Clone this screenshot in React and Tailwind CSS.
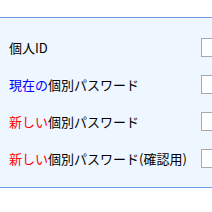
export default function App() {
  const rows = [
    { pre: "", preColor: "", rest: "個人ID" },
    { pre: "現在の", preColor: "text-[#0000ff]", rest: "個別パスワード" },
    { pre: "新しい", preColor: "text-[#ff0000]", rest: "個別パスワード" },
    { pre: "新しい", preColor: "text-[#ff0000]", rest: "個別パスワード(確認用)" },
  ];

  return (
    <div className="w-[212px] h-[212px] overflow-hidden bg-white font-['Noto_Sans_CJK_JP',sans-serif]">
      <div className="mt-[17px] border-y border-[#6f9be0] bg-[#eef6ff] pt-[20px] pb-[19px] flex flex-col gap-[18px]">
        {rows.map((r, i) => (
          <div key={i} className="flex items-center h-[19px]">
            <div className="w-[201px] shrink-0 pl-[9px] text-[13px] leading-none text-black whitespace-nowrap">
              {r.pre && <span className={r.preColor}>{r.pre}</span>}
              {r.rest}
            </div>
            <div className="w-[150px] h-[19px] shrink-0 bg-white border border-[#a9a9a9]" />
          </div>
        ))}
      </div>
    </div>
  );
}
